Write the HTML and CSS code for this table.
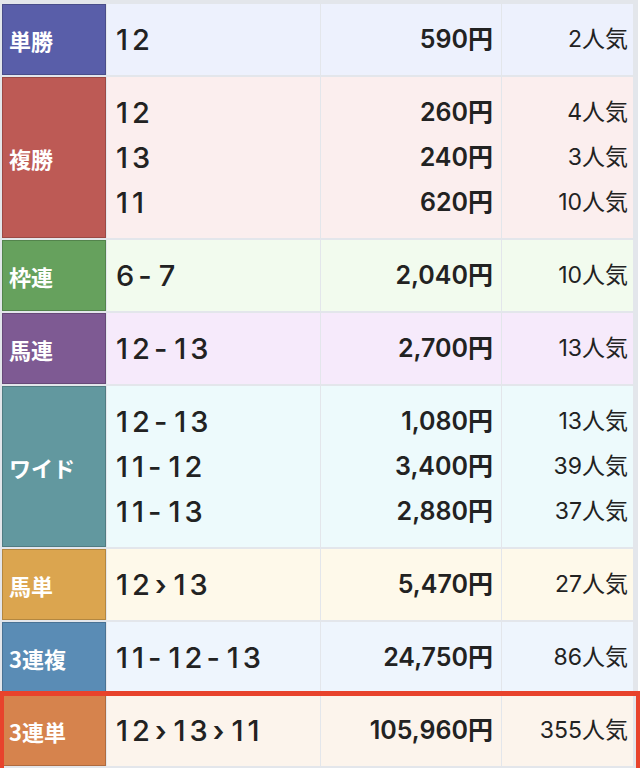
FILE: index.html
```html
<!DOCTYPE html>
<html lang="ja">
<head>
<meta charset="utf-8">
<title>払戻金</title>
<link rel="stylesheet" href="styles.css">
</head>
<body>
<div class="board">
  <div class="row tansho">
    <div class="label">単勝</div>
    <div class="combo"><div>12</div></div>
    <div class="pay"><div>590円</div></div>
    <div class="pop"><div>2人気</div></div>
  </div>
  <div class="row fukusho">
    <div class="label">複勝</div>
    <div class="combo"><div>12</div><div>13</div><div>11</div></div>
    <div class="pay"><div>260円</div><div>240円</div><div>620円</div></div>
    <div class="pop"><div>4人気</div><div>3人気</div><div>10人気</div></div>
  </div>
  <div class="row wakuren">
    <div class="label">枠連</div>
    <div class="combo"><div>6<span class="sep">-</span>7</div></div>
    <div class="pay"><div>2,040円</div></div>
    <div class="pop"><div>10人気</div></div>
  </div>
  <div class="row umaren">
    <div class="label">馬連</div>
    <div class="combo"><div>12<span class="sep">-</span>13</div></div>
    <div class="pay"><div>2,700円</div></div>
    <div class="pop"><div>13人気</div></div>
  </div>
  <div class="row wide">
    <div class="label">ワイド</div>
    <div class="combo"><div>12<span class="sep">-</span>13</div><div>11<span class="sep">-</span>12</div><div>11<span class="sep">-</span>13</div></div>
    <div class="pay"><div>1,080円</div><div>3,400円</div><div>2,880円</div></div>
    <div class="pop"><div>13人気</div><div>39人気</div><div>37人気</div></div>
  </div>
  <div class="row umatan">
    <div class="label">馬単</div>
    <div class="combo"><div>12<span class="arw">›</span>13</div></div>
    <div class="pay"><div>5,470円</div></div>
    <div class="pop"><div>27人気</div></div>
  </div>
  <div class="row sanrenpuku">
    <div class="label">3連複</div>
    <div class="combo"><div>11<span class="sep">-</span>12<span class="sep">-</span>13</div></div>
    <div class="pay"><div>24,750円</div></div>
    <div class="pop"><div>86人気</div></div>
  </div>
  <div class="row sanrentan hit">
    <div class="label">3連単</div>
    <div class="combo"><div>12<span class="arw">›</span>13<span class="arw">›</span>11</div></div>
    <div class="pay"><div>105,960円</div></div>
    <div class="pop"><div>355人気</div></div>
  </div>
</div>
</body>
</html>
```
FILE: styles.css
```css
html, body {
  margin: 0;
  padding: 0;
  background: #ffffff;
}

body {
  font-family: "Inter", "Noto Sans CJK JP", sans-serif;
  color: #222222;
  width: 640px;
  height: 768px;
  overflow: hidden;
}

.board {
  width: 631px;
  background: #e3e6eb;
  padding: 4px 5px 4px 2px;
  display: flex;
  flex-direction: column;
  gap: 2px;
}

.row {
  display: grid;
  grid-template-columns: 104px 213px 180px 131px;
  column-gap: 1px;
}

.label {
  display: flex;
  align-items: center;
  padding-left: 6px;
  color: #ffffff;
  font-family: "Noto Sans CJK JP", sans-serif;
  font-weight: 700;
  font-size: 22px;
  border: 1px solid rgba(0, 0, 0, 0.18);
}

.combo, .pay, .pop {
  padding: 13px 0;
}

.combo div, .pay div, .pop div {
  height: 45px;
  line-height: 45px;
  white-space: nowrap;
}

.combo {
  padding-left: 9px;
  font-size: 29px;
  font-weight: 500;
  letter-spacing: 4px;
}

.sep {
  display: inline-block;
  margin: 0 3px 0 0;
}

.arw {
  display: inline-block;
  font-size: 28px;
  font-weight: 600;
  margin: 0 3px 0 1px;
}

.pay {
  text-align: right;
  padding-right: 8px;
  font-size: 25px;
  font-weight: 600;
}

.pop {
  text-align: right;
  padding-right: 5px;
  font-size: 23px;
  font-weight: 400;
}

.tansho .label { background: #595ea9; }
.tansho .combo, .tansho .pay, .tansho .pop { background: #edf1fd; }

.fukusho .label { background: #bd5a55; }
.fukusho .combo, .fukusho .pay, .fukusho .pop { background: #fbeeee; }

.wakuren .label { background: #66a15d; }
.wakuren .combo, .wakuren .pay, .wakuren .pop { background: #f2fbee; }

.umaren .label { background: #7e5a93; }
.umaren .combo, .umaren .pay, .umaren .pop { background: #f6eafb; }

.wide .label { background: #62989f; }
.wide .combo, .wide .pay, .wide .pop { background: #edfafc; }

.umatan .label { background: #dba54f; }
.umatan .combo, .umatan .pay, .umatan .pop { background: #fef9ea; }

.sanrenpuku .label { background: #5a8cb5; }
.sanrenpuku .combo, .sanrenpuku .pay, .sanrenpuku .pop { background: #eef5fd; }

.sanrentan .label { background: #d6834d; }
.sanrentan .combo, .sanrentan .pay, .sanrentan .pop { background: #fcf4ec; }

.hit {
  position: relative;
}

.hit::after {
  content: "";
  position: absolute;
  top: -4px;
  left: -2px;
  right: -7px;
  bottom: -6px;
  border: 4px solid #e8432c;
  border-top-width: 5px;
  pointer-events: none;
}
```
